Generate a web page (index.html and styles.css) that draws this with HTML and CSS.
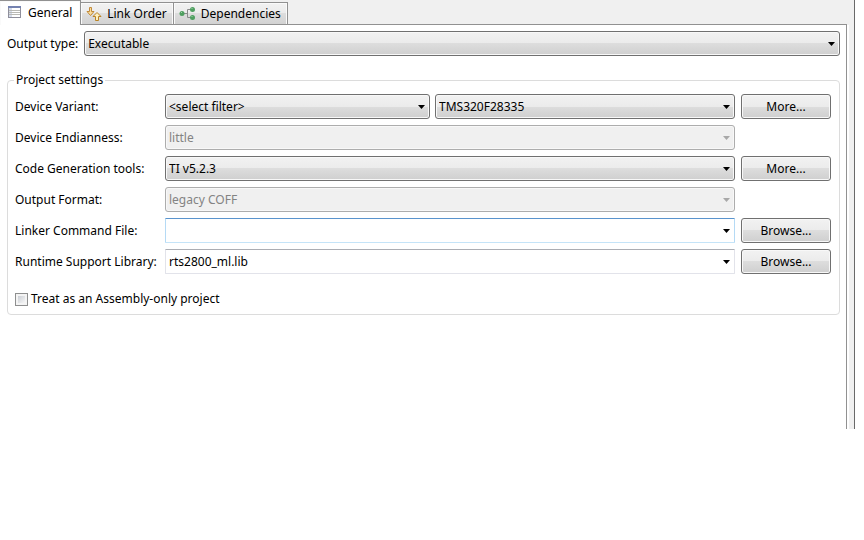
FILE: index.html
```html
<!DOCTYPE html>
<html lang="en">
<head>
    <meta charset="UTF-8">
    <meta name="viewport" content="width=device-width, initial-scale=1.0">
    <title>Project Properties</title>
    <link rel="stylesheet" href="styles.css">
</head>
<body>
    <div class="window">
        <div class="tabs" role="tablist">
            <button type="button" class="tab active" role="tab" aria-selected="true">
                <svg width="14" height="14" viewBox="0 0 14 14" shape-rendering="crispEdges">
                    <rect x="0" y="0" width="13" height="12" fill="#8f8f9c"/>
                    <rect x="0" y="0" width="13" height="2" fill="#7482b0"/>
                    <path d="M1 2h3v9H1z" fill="#d5dcec"/>
                    <path d="M4 2h8v9H4z" fill="#ffffff"/>
                    <path d="M1 4h11v1H1zM1 6h11v1H1zM1 8h11v1H1z" fill="#b9b9b4"/>
                </svg>
                General
            </button>
            <button type="button" class="tab" role="tab" aria-selected="false">
                <svg width="16" height="16" viewBox="0 0 16 16">
                    <path d="M3.500 1.500h2v4h2.500L4.500 9.500 1 5.500h2.500z" fill="#fbdc9a" stroke="#c08a3a"/>
                    <path d="M9.500 14.500h3v-4H15L11 6.500l-4 4h2.500z" fill="#fff0bd" stroke="#b98324"/>
                </svg>
                Link Order
            </button>
            <button type="button" class="tab" role="tab" aria-selected="false">
                <svg width="17" height="16" viewBox="0 0 17 16">
                    <path d="M5 7.500h3M12 3.500H8.500v8H12" fill="none" stroke="#8a8a8a"/>
                    <circle cx="3" cy="7.500" r="2.500" fill="#4f9f60"/>
                    <circle cx="13.500" cy="3.500" r="2.500" fill="#4f9f60"/>
                    <circle cx="13.500" cy="11.500" r="2.500" fill="#4f9f60"/>
                    <path d="M2 6.500h1M12.500 2.500h1M12.500 10.500h1" stroke="#a5d3ad"/>
                </svg>
                Dependencies
            </button>
        </div>

        <form class="panel">
            <div class="output">
                <label for="outputType">Output type:</label>
                <div class="combo">
                    <select id="outputType">
                        <option>Executable</option>
                    </select>
                </div>
            </div>

            <fieldset>
                <legend>Project settings</legend>
                <div class="row">
                    <label for="variant">Device Variant:</label>
                    <div class="variant">
                        <div class="combo">
                            <select id="variantFilter" aria-label="Device filter">
                                <option>&lt;select filter&gt;</option>
                            </select>
                        </div>
                        <div class="combo">
                            <select id="variant">
                                <option>TMS320F28335</option>
                            </select>
                        </div>
                    </div>
                    <button type="button" class="btn">More...</button>
                </div>
                <div class="row">
                    <label for="endianness">Device Endianness:</label>
                    <div class="combo disabled">
                        <select id="endianness" disabled>
                            <option>little</option>
                        </select>
                    </div>
                </div>
                <div class="row">
                    <label for="tools">Code Generation tools:</label>
                    <div class="combo">
                        <select id="tools">
                            <option>TI v5.2.3</option>
                        </select>
                    </div>
                    <button type="button" class="btn">More...</button>
                </div>
                <div class="row">
                    <label for="format">Output Format:</label>
                    <div class="combo disabled">
                        <select id="format" disabled>
                            <option>legacy COFF</option>
                        </select>
                    </div>
                </div>
                <div class="row">
                    <label for="linkerFile">Linker Command File:</label>
                    <div class="combo">
                        <input type="text" id="linkerFile" class="current" role="combobox" aria-expanded="false">
                    </div>
                    <button type="button" class="btn">Browse...</button>
                </div>
                <div class="row">
                    <label for="library">Runtime Support Library:</label>
                    <div class="combo">
                        <input type="text" id="library" role="combobox" aria-expanded="false" value="rts2800_ml.lib">
                    </div>
                    <button type="button" class="btn">Browse...</button>
                </div>
                <div class="check">
                    <input type="checkbox" id="assemblyOnly">
                    <label for="assemblyOnly">Treat as an Assembly-only project</label>
                </div>
            </fieldset>
        </form>
    </div>
</body>
</html>
```
FILE: styles.css
```css
* {
    box-sizing: border-box;
}
body {
    margin: 0;
    background-color: #FFFFFF;
    color: #000000;
    font-family: "Noto Sans", "Open Sans", sans-serif;
    font-size: 12px;
    line-height: 16px;
}
button, input, select {
    font: inherit;
    color: inherit;
}
.window {
    margin-right: 9px;
    padding-right: 5px;
    background-color: #F0F0F0;
    border-right: 1px solid #696969;
}

/* Tabs */
.tabs {
    display: flex;
    height: 25px;
    margin-right: 2px;
    border-bottom: 1px solid #919191;
}
.tab {
    display: flex;
    align-items: center;
    gap: 5px;
    height: 22px;
    margin-top: 2px;
    padding: 0 6px 0 5px;
    border: 1px solid #919191;
    border-left-width: 0;
    border-bottom: none;
    background: linear-gradient(#F2F2F2, #EBEBEB 50%, #DDDDDD 50%, #D2D2D2);
    box-shadow: inset 1px 1px #FAFAFA, inset -1px 0 #FAFAFA;
    white-space: nowrap;
}
.tab.active {
    gap: 6px;
    height: 25px;
    margin-top: 0;
    padding: 0 8px;
    background: #FFFFFF;
}

/* Page */
.panel {
    margin-right: 2px;
    padding: 6px 6px 114px 7px;
    background-color: #FFFFFF;
    border-right: 1px solid #919191;
    box-shadow: 2px 0 #FFFFFF;
}
.output {
    display: flex;
    align-items: center;
    gap: 6px;
    margin-bottom: 16px;
}
fieldset {
    min-width: 0;
    margin: 0;
    padding: 6px 8px 7px 7px;
    border: 1px solid #DCDCDC;
    border-radius: 4px;
}
legend {
    padding: 0 2px;
    margin-left: -1px;
}
.row {
    display: grid;
    grid-template-columns: 144px 1fr 90px;
    align-items: center;
    column-gap: 6px;
    margin-bottom: 6px;
    white-space: nowrap;
}
.variant {
    display: grid;
    grid-template-columns: 265fr 300fr;
    gap: 5px;
}
.combo {
    position: relative;
    flex: 1;
    min-width: 0;
}
.combo::after {
    content: "";
    position: absolute;
    top: 11px;
    right: 5px;
    width: 7px;
    height: 4px;
    background-color: #000000;
    clip-path: polygon(0 0, 100% 0, 50% 100%);
    pointer-events: none;
}
.combo.disabled::after {
    background-color: #A8A8A8;
}
.combo select, .combo input {
    display: block;
    appearance: none;
    width: 100%;
    height: 25px;
    margin: 0;
    padding: 0 20px 0 3px;
    border: 1px solid #707070;
    border-radius: 3px;
    outline: none;
}
.combo select, .btn {
    background: linear-gradient(#F2F2F2, #EBEBEB 50%, #DDDDDD 50%, #CFCFCF);
    box-shadow: inset 0 0 0 1px #F8F8F8;
}
.combo select:disabled {
    background: #F0F0F0;
    border-color: #ADADAD;
    color: #838383;
    opacity: 1;
}
.combo input {
    background: #FFFFFF;
    border-color: #ABADB3 #E2E3EA #E2E3EA;
    border-radius: 1px;
}
.combo input.current, .combo input:focus {
    border-color: #5A94CE #B5DAF5 #C5E4F8;
}
.btn {
    height: 25px;
    padding: 0;
    border: 1px solid #707070;
    border-radius: 3px;
}
.check {
    display: flex;
    align-items: center;
    gap: 3px;
    margin-top: 17px;
}
.check input {
    appearance: none;
    width: 13px;
    height: 13px;
    margin: 0;
    border: 1px solid #8E8F8F;
    background: linear-gradient(135deg, #CBCFD5, #F6F6F6) content-box, #F4F4F4;
    padding: 2px;
}
```
